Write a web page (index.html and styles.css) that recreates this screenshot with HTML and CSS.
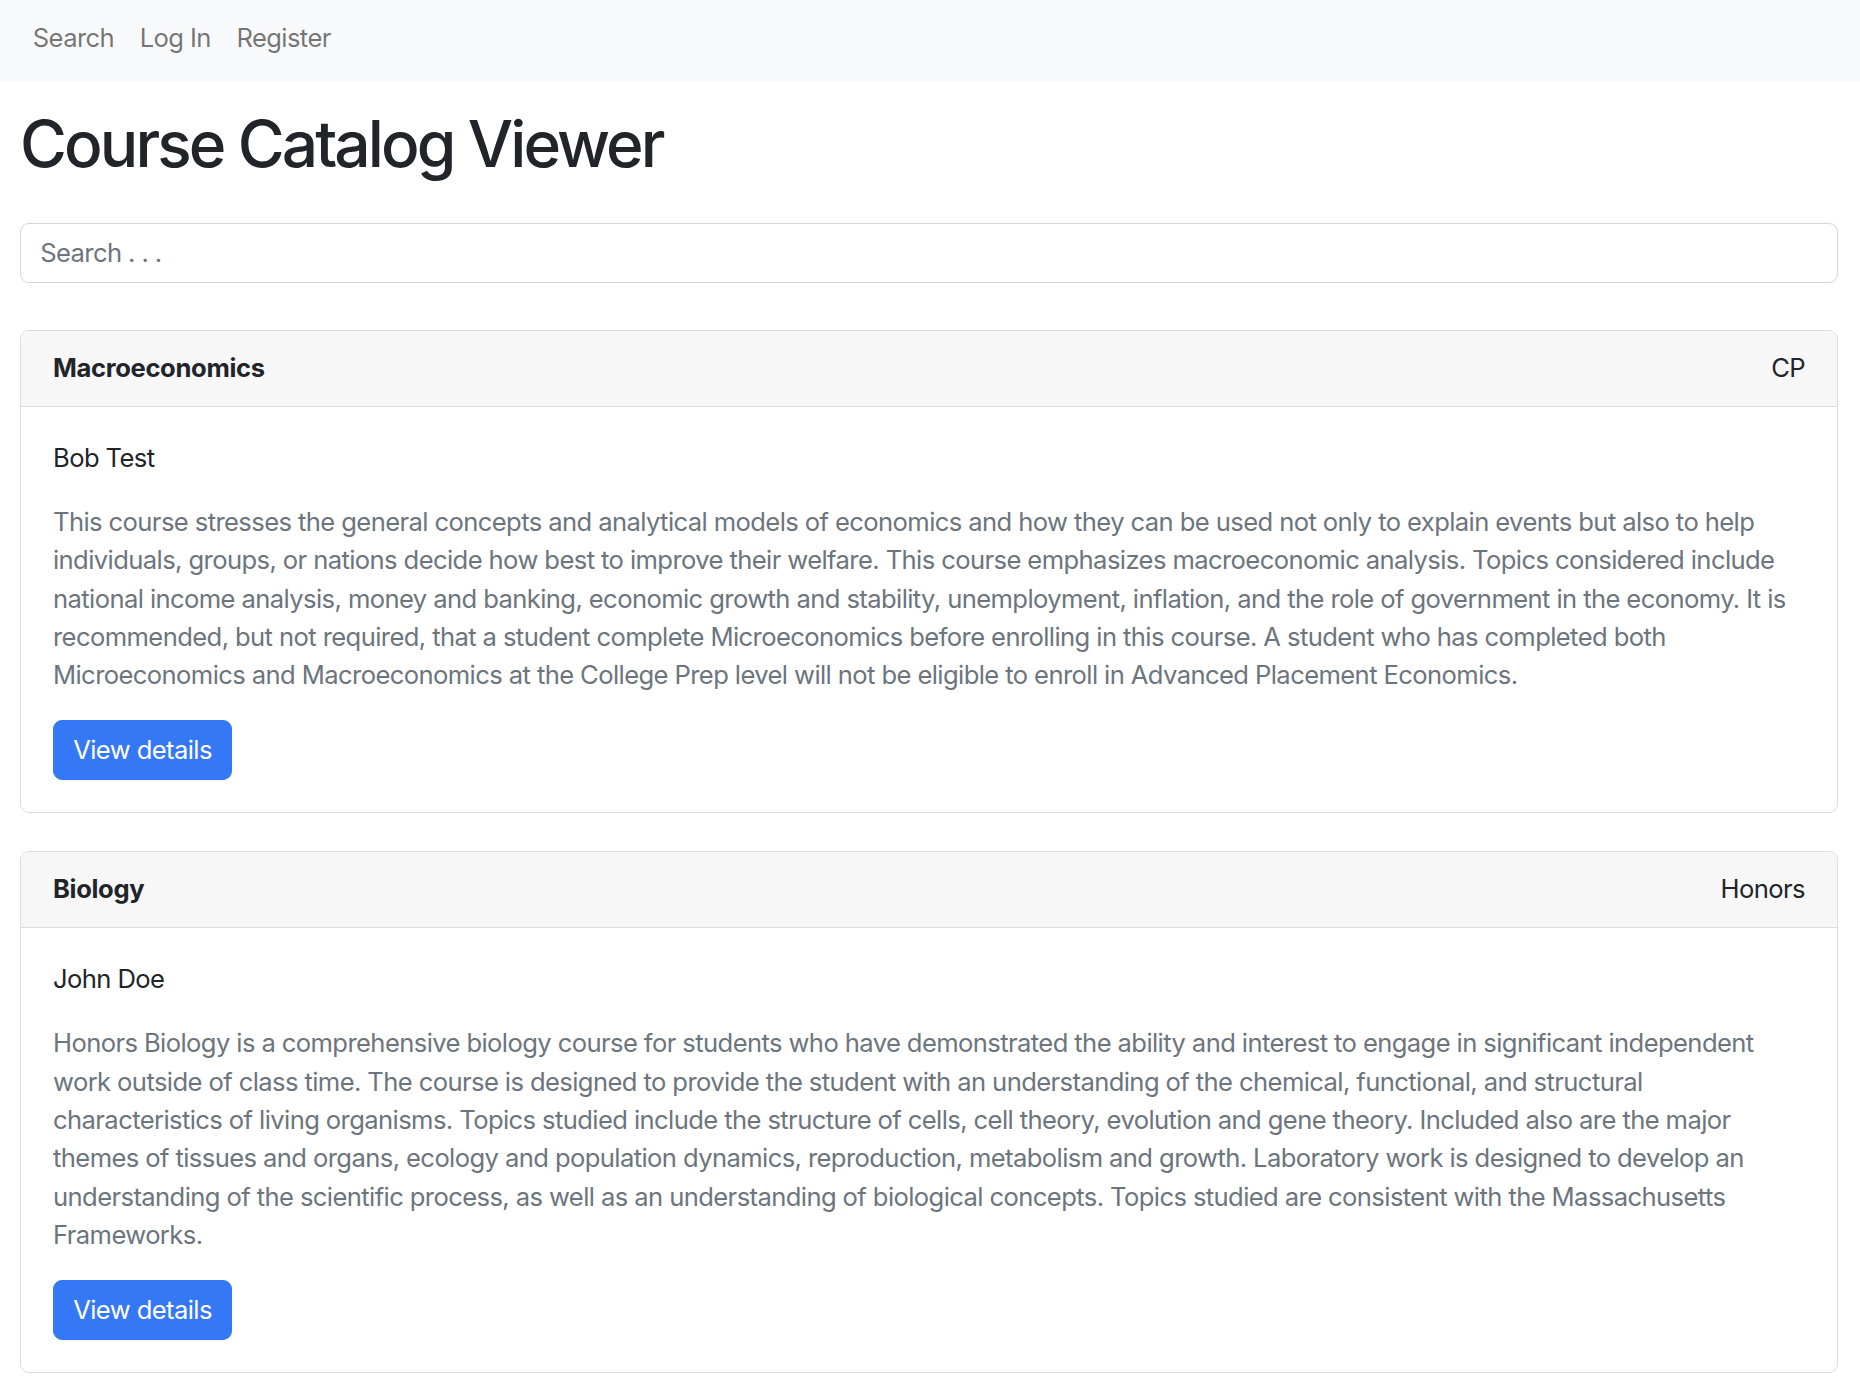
FILE: index.html
```html
<!DOCTYPE html>
<html lang="en">
<head>
<meta charset="utf-8">
<title>Course Catalog Viewer</title>
<link rel="stylesheet" href="styles.css">
</head>
<body>
<nav class="navbar">
  <ul class="nav">
    <li><a class="nav-link" href="#">Search</a></li>
    <li><a class="nav-link" href="#">Log In</a></li>
    <li><a class="nav-link" href="#">Register</a></li>
  </ul>
</nav>
<main class="container">
  <h1 class="title">Course Catalog Viewer</h1>
  <input class="search" type="text" placeholder="Search . . .">
  <div class="course-list">
    <article class="card">
      <header class="card-header">
        <span class="course-name">Macroeconomics</span>
        <span class="course-level">CP</span>
      </header>
      <div class="card-body">
        <p class="teacher">Bob Test</p>
        <p class="description">This course stresses the general concepts and analytical models of economics and how they can be used not only to explain events but also to help individuals, groups, or nations decide how best to improve their welfare. This course emphasizes macroeconomic analysis. Topics considered include national income analysis, money and banking, economic growth and stability, unemployment, inflation, and the role of government in the economy. It is recommended, but not required, that a student complete Microeconomics before enrolling in this course. A student who has completed both Microeconomics and Macroeconomics at the College Prep level will not be eligible to enroll in Advanced Placement Economics.</p>
        <a class="btn" href="#">View details</a>
      </div>
    </article>
    <article class="card">
      <header class="card-header">
        <span class="course-name">Biology</span>
        <span class="course-level">Honors</span>
      </header>
      <div class="card-body">
        <p class="teacher">John Doe</p>
        <p class="description">Honors Biology is a comprehensive biology course for students who have demonstrated the ability and interest to engage in significant independent work outside of class time. The course is designed to provide the student with an understanding of the chemical, functional, and structural characteristics of living organisms. Topics studied include the structure of cells, cell theory, evolution and gene theory. Included also are the major themes of tissues and organs, ecology and population dynamics, reproduction, metabolism and growth. Laboratory work is designed to develop an understanding of the scientific process, as well as an understanding of biological concepts. Topics studied are consistent with the Massachusetts Frameworks.</p>
        <a class="btn" href="#">View details</a>
      </div>
    </article>
  </div>
</main>
</body>
</html>
```

FILE: styles.css
```css
* {
  box-sizing: border-box;
}

html, body {
  margin: 0;
  padding: 0;
  background: #ffffff;
}

body {
  font-family: Inter, "Noto Sans", "Liberation Sans", sans-serif;
  font-size: 25.6px;
  line-height: 38.4px;
  letter-spacing: -0.6px;
  color: #212529;
}

.navbar {
  background: #f8f9fa;
  height: 82px;
  padding: 19px 0 0 20px;
}

.nav {
  list-style: none;
  margin: 0;
  padding: 0;
  display: flex;
}

.nav-link {
  display: block;
  padding: 0 12.8px;
  color: rgba(0, 0, 0, 0.55);
  text-decoration: none;
}

.container {
  padding: 0 22px 0 20px;
}

.title {
  font-size: 64px;
  line-height: 76.8px;
  font-weight: 500;
  letter-spacing: -2.9px;
  margin: 24px 0 40px;
  color: #212529;
}

.search {
  display: block;
  width: 100%;
  height: 60px;
  padding: 9.6px 19.2px;
  font-family: inherit;
  font-size: 25.6px;
  line-height: 38.4px;
  letter-spacing: -0.6px;
  color: #212529;
  border: 1px solid #d3d7dc;
  border-radius: 9px;
  background: #fff;
  outline: none;
}

.search::placeholder {
  color: #6c757d;
}

.course-list {
  margin-top: 47px;
  display: flex;
  flex-direction: column;
  gap: 38.4px;
}

.card {
  border: 1px solid #dcdcdc;
  border-radius: 9px;
  overflow: hidden;
}

.card-header {
  display: flex;
  justify-content: space-between;
  align-items: center;
  background: #f7f7f7;
  border-bottom: 1px solid #dcdcdc;
  padding: 18px 32px 18.5px;
}

.course-name {
  font-weight: 700;
  letter-spacing: -0.35px;
}

.card-body {
  padding: 32px;
}

.teacher {
  margin: 0 0 25.6px;
}

.description {
  margin: 0 0 25.6px;
  color: #6c757d;
}

.btn {
  display: inline-block;
  padding: 9.6px 19.2px;
  background: #3478f6;
  color: #ffffff;
  border: 1px solid #3478f6;
  border-radius: 9px;
  text-decoration: none;
}
```
